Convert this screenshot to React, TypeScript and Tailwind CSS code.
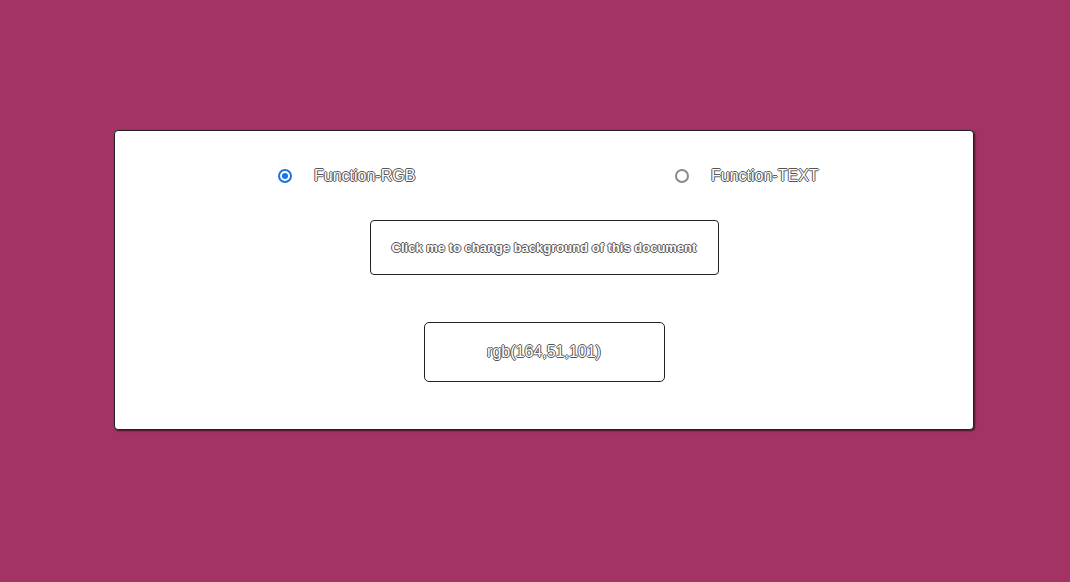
import React, { useState } from "react";

const outline =
  "[text-shadow:1px_0_0_#555,-1px_0_0_#555,0_1px_0_#555,0_-1px_0_#555]";

function Radio({ checked, onClick }: { checked: boolean; onClick: () => void }) {
  return (
    <span
      onClick={onClick}
      className={`w-[14px] h-[14px] rounded-full border-2 flex items-center justify-center bg-white ${
        checked ? "border-[#1a73e8]" : "border-[#8a8a8a]"
      }`}
    >
      {checked && <span className="w-[6px] h-[6px] rounded-full bg-[#1a73e8]" />}
    </span>
  );
}

export default function App() {
  const [mode, setMode] = useState("rgb");
  return (
    <div className="w-[1070px] h-[582px] bg-[#a43365] pt-[130px] pl-[114px] font-['Liberation_Sans',Arial,sans-serif]">
      <div className="w-[860px] h-[300px] bg-white border border-[#222] rounded-[4px] shadow-[1px_1px_2px_rgba(0,0,0,0.6)] flex flex-col items-center">
        <div className="self-start flex items-center mt-[35px] ml-[163px] h-[20px]">
          <label className="w-[397px] flex items-center">
            <Radio checked={mode === "rgb"} onClick={() => setMode("rgb")} />
            <span className={`ml-[22px] text-[16px] text-white ${outline}`}>Function-RGB</span>
          </label>
          <label className="flex items-center">
            <Radio checked={mode === "text"} onClick={() => setMode("text")} />
            <span className={`ml-[22px] text-[16px] text-white ${outline}`}>Function-TEXT</span>
          </label>
        </div>
        <button
          className={`mt-[34px] w-[349px] h-[55px] border border-[#222] rounded-[4px] bg-white text-white text-[13px] font-bold ${outline}`}
        >
          Click me to change background of this document
        </button>
        <div
          className={`mt-[47px] w-[241px] h-[60px] border border-[#222] rounded-[5px] flex items-center justify-center text-[16px] text-white ${outline}`}
        >
          rgb(164,51,101)
        </div>
      </div>
    </div>
  );
}
